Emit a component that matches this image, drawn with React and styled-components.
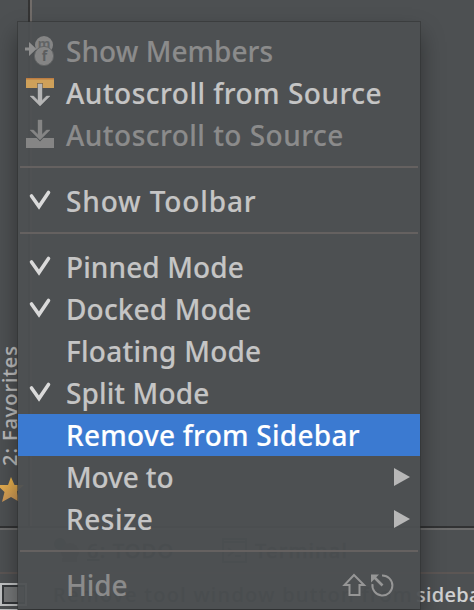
import React from "react";
import styled, { createGlobalStyle } from "styled-components";

const Global = createGlobalStyle`
  * { box-sizing: border-box; }
  body { margin: 0; background: #4d5052; overflow: hidden; }
`;

const Window = styled.div`
  position: relative;
  width: 474px;
  height: 610px;
  overflow: hidden;
  background: #4d5052;
  color: #bbb;
  font-family: "Noto Sans", "Open Sans", sans-serif;
  display: flex;
  flex-direction: column;
`;

const Workspace = styled.div`
  height: 526px;
  display: flex;
`;

const SideStrip = styled.div`
  width: 28px;
  padding: 338px 0 0 0;
  display: flex;
  flex-direction: column;
  align-items: flex-start;
  gap: 8px;
`;

const StripLabel = styled.div`
  writing-mode: vertical-rl;
  transform: rotate(180deg);
  width: 24px;
  height: 128px;
  line-height: 24px;
  margin-left: -2px;
  font-size: 20px;
  font-weight: 500;
  letter-spacing: 0.95px;
  white-space: nowrap;
  -webkit-text-stroke: 0.2px currentColor;
`;

const StripEdge = styled.div`
  width: 4px;
  background: #343434;
  border-right: 2px solid #716c69;
`;

const ToolBar = styled.div`
  height: 48px;
  border-top: 2px solid #313233;
  border-bottom: 2px solid #5c5654;
  box-shadow: inset 0 2px #6b6b6b;
  padding: 0 0 0 53px;
  display: flex;
  align-items: center;
  gap: 8px;
  color: #101315;
  font-size: 20px;
  font-weight: 500;
`;

const ToolName = styled.span`
  width: ${(p) => p.$w || "auto"};
  letter-spacing: 1.2px;
  white-space: nowrap;
  -webkit-text-stroke: 0.5px currentColor;
`;

const StatusBar = styled.div`
  height: 36px;
  display: flex;
  align-items: center;
  font-size: 20px;
  font-weight: 500;
  white-space: nowrap;
  color: #d2d2d2;
  padding-top: 5px;
  letter-spacing: 0.3px;
  -webkit-text-stroke: 0.15px currentColor;
`;

const StatusLead = styled.span`
  flex: none;
  width: 363px;
  margin-left: 25px;
  color: #101315;
  letter-spacing: 1.3px;
`;

const Menu = styled.div`
  position: absolute;
  left: 18px;
  top: 22px;
  width: 402px;
  height: 587px;
  padding-top: 8px;
  background: rgba(77, 80, 82, 0.95);
  box-shadow: 0 0 0 1px rgba(45, 47, 48, 0.5), 0 12px 22px rgba(0, 0, 0, 0.4);
`;

const Item = styled.div`
  height: 42px;
  display: flex;
  align-items: center;
  padding: 0 10px 0 8px;
  background: ${(p) => (p.$active ? "#3b7ad1" : "transparent")};
  color: ${(p) => (p.$active ? "#fff" : p.$dim ? "#8b8b8b" : "#c5c5c5")};
`;

const IconSlot = styled.div`
  width: 40px;
  height: 42px;
  flex: none;
`;

const Label = styled.span`
  flex: 1;
  font-size: 28px;
  line-height: 42px;
  font-weight: 500;
  letter-spacing: ${(p) => p.$track || 0}px;
  white-space: nowrap;
  -webkit-text-stroke: 0.15px currentColor;
`;

const Separator = styled.div`
  height: 24px;
  padding: 10px 2px 0;
  &::before {
    content: "";
    display: block;
    height: 2px;
    background: #656160;
  }
`;

const Svg = styled.svg`
  display: block;
  flex: none;
  overflow: visible;
`;

const CheckIcon = () => (
  <Svg width="40" height="42">
    <path d="M5.500 16L13 26.500L22.500 12.500" fill="none" stroke="#dadada" strokeWidth="3.6" strokeLinecap="round" />
  </Svg>
);

const MembersIcon = () => (
  <Svg width="40" height="42" fontFamily="Noto Sans, sans-serif" fontWeight="700" textAnchor="middle">
    <circle cx="18" cy="15" r="9" fill="#858585" />
    <text x="18" y="17.5" fontSize="13" fill="#626465">m</text>
    <circle cx="18" cy="26" r="9.6" fill="#858585" stroke="#626465" strokeWidth="1" />
    <text x="18.5" y="31" fontSize="14" fill="#5c5e5f">f</text>
    <path d="M-1 17.500H3V12L10.500 19L3 26V20.500H-1Z" fill="#8e8e8e" />
  </Svg>
);

const FromSourceIcon = () => (
  <Svg width="40" height="42">
    <path d="M0 6H28V16H0Z" fill="#cfa15a" />
    <path d="M0 6H28V7.5H0Z" fill="#bd7d42" />
    <path d="M11 11H17V16H11Z" fill="#806b4b" />
    <path d="M12 12H16V28.500L20.500 24H24L14 34L4 24H7.500L12 28.500Z" fill="#b5b5b5" stroke="#b5b5b5" strokeWidth="0.4" />
  </Svg>
);

const ToSourceIcon = () => (
  <Svg width="40" height="42">
    <path d="M0 24H28V34H0Z" fill="#858585" />
    <path d="M3 16L14 27.500L25 16Z" fill="#4d5052" />
    <path d="M12 6H16V20.500L20.500 16H24L14 26L4 16H7.500L12 20.500Z" fill="#858585" stroke="#858585" strokeWidth="0.4" />
  </Svg>
);

const SubmenuArrow = () => (
  <Svg width="16" height="18">
    <path d="M0 0L16 9L0 18Z" fill="#b7b7b7" />
  </Svg>
);

const ShortcutIcon = () => (
  <Svg width="68" height="42">
    <g fill="none" stroke="#969696" strokeWidth="2">
      <path d="M12 11L22 21H17.500V31H7.500V21H2.500Z" />
      <path d="M40 11.500A10 10 0 1 1 30.500 20" />
      <path d="M31 12L40.500 21.500" strokeWidth="2.6" />
    </g>
    <path d="M29 10.500H37L29 18.500Z" fill="#969696" />
  </Svg>
);

const Star = () => (
  <Svg width="28" height="28">
    <defs>
      <linearGradient id="gold" x2="0" y2="1">
        <stop offset="0" stopColor="#edb548" />
        <stop offset="1" stopColor="#c99558" />
      </linearGradient>
    </defs>
    <path d="M11 3L14.500 11H24L17 17.500L19.500 28L11 23L2 28L4.500 18L-3 11H8Z" fill="url(#gold)" />
  </Svg>
);

const WindowIcon = () => (
  <Svg width="28" height="31">
    <path d="M-1 4H27V27H-1Z" fill="#c1c3c4" />
    <path d="M2 6H25V25H2Z" fill="#34373a" />
    <path d="M4 8H24V23H4Z" fill="#77797a" />
    <path d="M0 31H18" stroke="#c1c3c4" strokeWidth="2" />
  </Svg>
);

const TodoIcon = () => (
  <Svg width="26" height="26">
    <circle cx="7" cy="7" r="6" fill="#20262a" />
    <circle cx="17" cy="15" r="9" fill="#302b27" />
    <path d="M9 21H24V25H9Z" fill="#302b27" />
  </Svg>
);

const TerminalIcon = () => (
  <Svg width="25" height="25">
    <path d="M1 1H24V24H1ZM1 4H24M6 10L11 14L6 18M13 18H19" fill="none" stroke="#20262a" strokeWidth="2" />
  </Svg>
);

const items = [
  { text: "Show Members", icon: <MembersIcon />, dim: true, track: 0.05 },
  { text: "Autoscroll from Source", icon: <FromSourceIcon />, track: 0.49 },
  { text: "Autoscroll to Source", icon: <ToSourceIcon />, dim: true, track: 0.48 },
  null,
  { text: "Show Toolbar", icon: <CheckIcon />, track: 0.86 },
  null,
  { text: "Pinned Mode", icon: <CheckIcon />, track: 0.1 },
  { text: "Docked Mode", icon: <CheckIcon />, track: 0.15 },
  { text: "Floating Mode", track: 0.25 },
  { text: "Split Mode", icon: <CheckIcon />, track: 0.12 },
  { text: "Remove from Sidebar", active: true, track: 0.27 },
  { text: "Move to", end: <SubmenuArrow />, track: -0.1 },
  { text: "Resize", end: <SubmenuArrow />, track: 0.5 },
  null,
  { text: "Hide", dim: true, end: <ShortcutIcon />, track: -0.15 },
];

export default function App() {
  return (
    <Window>
      <Global />
      <Workspace>
        <SideStrip>
          <StripLabel>2: Favorites</StripLabel>
          <Star />
        </SideStrip>
        <StripEdge />
      </Workspace>
      <ToolBar>
        <TodoIcon />
        <ToolName $w="127px"><u>6</u>: TODO</ToolName>
        <TerminalIcon />
        <ToolName>Terminal</ToolName>
      </ToolBar>
      <StatusBar>
        <WindowIcon />
        <StatusLead>Remove tool window button from</StatusLead>
        <span>sidebar</span>
      </StatusBar>
      <Menu>
        {items.map((it, i) =>
          it ? (
            <Item key={it.text} $active={it.active} $dim={it.dim}>
              <IconSlot>{it.icon}</IconSlot>
              <Label $track={it.track}>{it.text}</Label>
              {it.end}
            </Item>
          ) : (
            <Separator key={i} />
          )
        )}
      </Menu>
    </Window>
  );
}
